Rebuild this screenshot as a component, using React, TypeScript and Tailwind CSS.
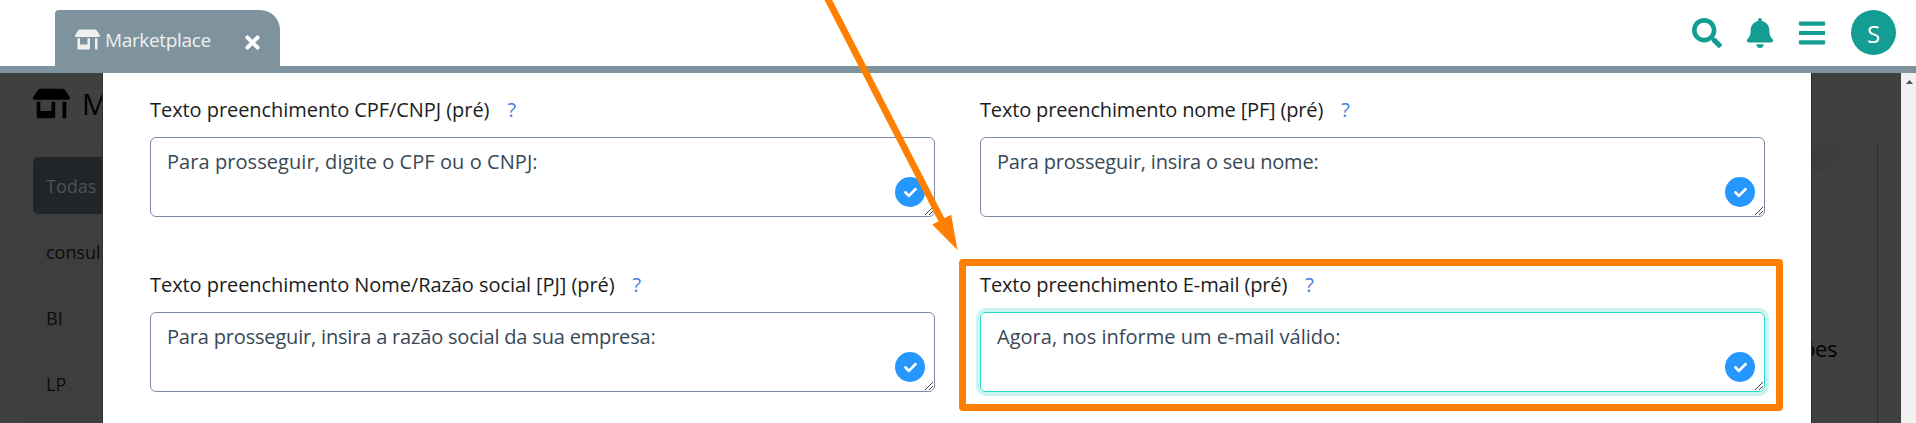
import { FaBell, FaSearch, FaStoreAlt, FaTimes, FaBars, FaCheck } from 'react-icons/fa';

type FieldProps = {
  label: string;
  value: string;
  labelSpacing: string;
  valueSpacing: string;
  focused?: boolean;
};

function Field({ label, value, labelSpacing, valueSpacing, focused }: FieldProps) {
  return (
    <div className="flex h-[175px] w-[785px] flex-col">
      <div className="flex h-[43px] items-start gap-[18px] pt-0.5 text-[20px] leading-7 font-normal whitespace-nowrap text-[#1c1c1c]">
        <span className={labelSpacing}>{label}</span>
        <span className="text-[#4a7de0]">?</span>
      </div>
      <div
        className={`relative flex h-20 rounded-[6px] border px-4 py-2.5 text-[20px] leading-7 font-normal whitespace-nowrap text-[#374856] ${
          focused ? 'border-[#2bd9cc] shadow-[0_0_0_4px_#c9f5f2]' : 'border-[#7c8ba5]'
        }`}
      >
        <span className={valueSpacing}>{value}</span>
        <span className="absolute right-[9px] bottom-[9px] flex size-[30px] items-center justify-center rounded-full bg-[#2597ff]">
          <FaCheck className="size-[13px] text-white" />
        </span>
        <svg className="absolute right-px bottom-px h-2 w-2" viewBox="0 0 8 8" fill="none" stroke="#444" strokeWidth="1">
          <path d="M0 8 8 0M4 8 8 4" />
        </svg>
      </div>
    </div>
  );
}

export default function App() {
  return (
    <div className="relative flex h-[423px] w-[1916px] flex-col overflow-hidden bg-white font-['Open_Sans','Noto_Sans',sans-serif]">
      <header className="flex h-[73px] shrink-0 items-start justify-between border-b-[7px] border-[#7e939e] pt-2.5 pr-5 pl-[55px]">
        <div className="flex h-14 w-[225px] items-start rounded-tl-[4px] rounded-tr-[20px] bg-[#7e939e] pl-5 text-[#f0f0f0]">
          <FaStoreAlt className="mt-[17px] h-[25px] w-[25px]" />
          <span className="mt-[17px] ml-[5px] w-[137px] text-[19px] leading-[26px] tracking-[-0.35px]">Marketplace</span>
          <FaTimes className="mt-[22px] size-[21px] text-white" />
        </div>
        <div className="flex items-start text-[#149d93]">
          <FaSearch className="mt-2 size-[30px]" />
          <FaBell className="mt-2 ml-[23px] size-[30px]" />
          <FaBars className="mt-2 ml-[22px] size-[30px]" />
          <div className="ml-[24px] flex size-[45px] items-center justify-center rounded-full bg-[#149d93] pt-0.5 text-[24px] text-white">S</div>
        </div>
      </header>

      <div className="flex min-h-0 flex-1 bg-[#404040]">
        <aside className="flex w-[103px] flex-col overflow-hidden border-r border-[#303030] text-black">
          <div className="flex h-[72px] shrink-0 items-start pl-[33px] whitespace-nowrap">
            <FaStoreAlt className="mt-[12px] h-[37px] w-[37px] shrink-0" />
            <span className="mt-[11px] ml-[12px] text-[29px] leading-10">M</span>
          </div>
          <nav className="ml-[21px] flex flex-1 flex-col bg-[#3e3e3e] pt-3 pl-3 text-[18px] leading-[59px] whitespace-nowrap text-[#0c0c0c]">
            <div className="h-[57px] shrink-0 rounded-l-[5px] bg-[#1f2528] pl-[13px] text-[#505253]">Todas</div>
            <div className="mt-[9px] h-[57px] shrink-0 pl-[13px]">consul</div>
            <div className="mt-[9px] h-[57px] shrink-0 pl-[13px]">BI</div>
            <div className="mt-[9px] h-[57px] shrink-0 pl-[13px]">LP</div>
          </nav>
        </aside>

        <main className="grid w-[1708px] grid-cols-[785px_785px] content-start gap-x-[45px] bg-white pt-[21px] pl-[47px]">
          <Field label="Texto preenchimento CPF/CNPJ (pré)" value="Para prosseguir, digite o CPF ou o CNPJ:" labelSpacing="tracking-[-0.06px]" valueSpacing="tracking-[0.06px]" />
          <Field label="Texto preenchimento nome [PF] (pré)" value="Para prosseguir, insira o seu nome:" labelSpacing="tracking-[-0.16px]" valueSpacing="tracking-[-0.19px]" />
          <Field label="Texto preenchimento Nome/Razão social [PJ] (pré)" value="Para prosseguir, insira a razão social da sua empresa:" labelSpacing="tracking-[-0.06px]" valueSpacing="tracking-[-0.18px]" />
          <Field label="Texto preenchimento E-mail (pré)" value="Agora, nos informe um e-mail válido:" labelSpacing="tracking-[-0.13px]" valueSpacing="tracking-[0.02px]" focused />
        </main>

        <div className="flex w-[90px] flex-col overflow-hidden border-l border-[#2c2c2c] pt-[72px]">
          <div className="flex h-[278px] w-[66px] flex-col border-r border-[#2b2b2b]">
            <div className="h-7 w-[29px] rounded-br-[28px] bg-[#3d3d3d]" />
            <div className="mt-[159px] flex w-[25px] justify-end text-[22px] leading-8 tracking-[-0.4px] text-black">ões</div>
          </div>
        </div>
        <div className="flex w-[15px] justify-center bg-[#f1f1f1] pt-[7px] pl-0.5">
          <svg className="h-1 w-[7px]" viewBox="0 0 7 4" fill="#505050"><path d="M0 4 3.5 0 7 4Z" /></svg>
        </div>
      </div>

      <div className="absolute top-[259px] left-[959px] h-[152px] w-[824px] rounded-[4px] border-[7px] border-[#ff8000]" />
      <svg className="absolute top-0 left-[810px] h-[260px] w-[160px]" viewBox="810 0 160 260" fill="#ff8000">
        <path d="M824.5 0H832.2L944.3 218 951.2 214.8 957.5 250 932.2 224.5 938.5 221.3Z" />
      </svg>
    </div>
  );
}
